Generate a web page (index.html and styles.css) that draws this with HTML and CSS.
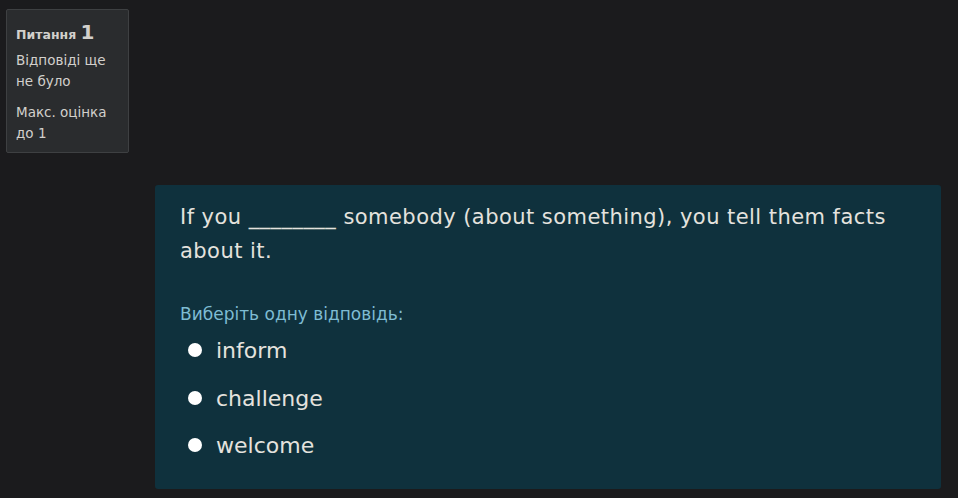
FILE: index.html
```html
<!DOCTYPE html>
<html lang="uk">
<head>
<meta charset="utf-8">
<link rel="stylesheet" href="styles.css">
</head>
<body>
<div class="page">
  <div class="info">
    <h3 class="qno">Питання <span class="num">1</span></h3>
    <div class="state">Відповіді ще не було</div>
    <div class="grade">Макс. оцінка до 1</div>
  </div>
  <div class="content">
    <div class="qtext">If you ________ somebody (about something), you tell them facts about it.</div>
    <div class="prompt">Виберіть одну відповідь:</div>
    <div class="answers">
      <label class="opt"><span class="dot"></span><span>inform</span></label>
      <label class="opt"><span class="dot"></span><span>challenge</span></label>
      <label class="opt"><span class="dot"></span><span>welcome</span></label>
    </div>
  </div>
</div>
</body>
</html>
```
FILE: styles.css
```css
html, body {
  margin: 0;
  background: #1b1b1d;
  height: 100%;
}
body {
  font-family: "DejaVu Sans", sans-serif;
  color: #dcdad6;
  overflow: hidden;
}
.page {
  padding: 9px 17px 0 6px;
  display: flex;
  flex-direction: column;
}
.info {
  width: 104px;
  height: 126px;
  padding: 8px 8px 8px 9px;
  background: #2a2c2e;
  border: 1px solid #3e4042;
  border-radius: 2px;
  font-size: 13.5px;
  line-height: 21px;
  color: #d2d0cc;
}
.qno {
  margin: 0 0 1px;
  font-size: 12.5px;
  font-weight: 700;
  line-height: 28px;
}
.qno .num {
  font-size: 20px;
}
.state {
  margin-bottom: 10px;
}
.content {
  margin: 32px 0 0 149px;
  height: 304px;
  box-sizing: border-box;
  background: #0f313d;
  border-radius: 3px;
  padding: 15px 25px 0 25px;
}
.qtext {
  font-size: 21px;
  line-height: 34px;
  letter-spacing: 0.45px;
  color: #e4e2de;
  max-width: 736px;
}
.prompt {
  margin-top: 36px;
  font-size: 17px;
  color: #7ebcd3;
  line-height: 20px;
}
.answers {
  margin-top: 10px;
  display: flex;
  flex-direction: column;
  gap: 13.5px;
}
.opt {
  display: flex;
  align-items: center;
  gap: 14px;
  padding-left: 8px;
  font-size: 22px;
  line-height: 34px;
  color: #e4e2de;
}
.dot {
  width: 14px;
  height: 14px;
  border-radius: 50%;
  background: #ffffff;
  margin-top: -2px;
}
```
